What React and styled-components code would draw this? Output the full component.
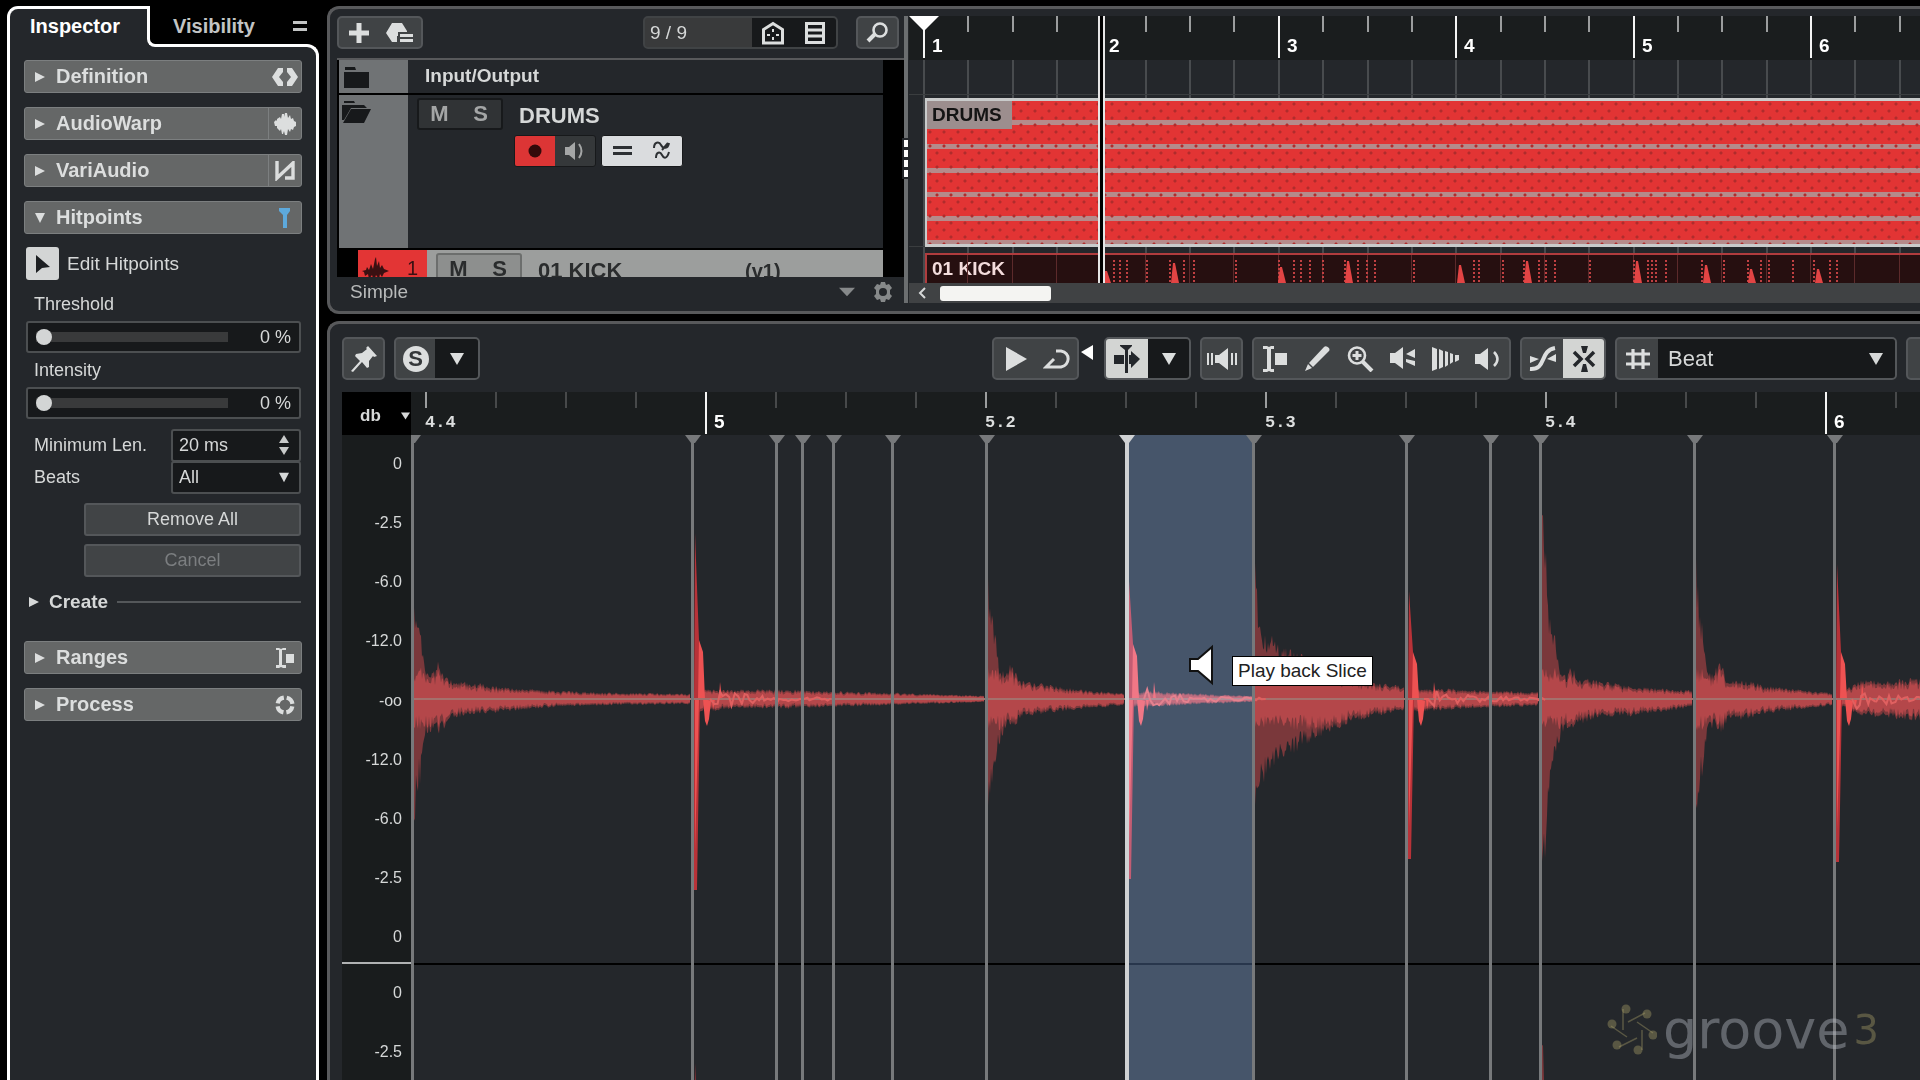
import React, { useState } from "react";
import styled, { createGlobalStyle } from "styled-components";

const GlobalStyle = createGlobalStyle`
  * {
    box-sizing: border-box;
  }

  body {
    margin: 0;
    background: #000;
    color: #d6d8d8;
    font-family: "Liberation Sans", Arial, sans-serif;
    font-size: 18px;
    overflow: hidden;
  }

  button, input, select {
    font: inherit;
    color: inherit;
    margin: 0;
    padding: 0;
    border: 0;
    background: none;
  }

  svg {
    display: block;
    flex: none;
  }
`;

const Page = styled.div`
  display: grid;
  grid-template-columns: 312px minmax(0, 1fr);
  grid-template-rows: minmax(0, 1fr);
  column-gap: 8px;
  height: 100vh;
  padding: 6px 0 0 7px;
  overflow: hidden;
`;

/* ---------- inspector ---------- */

const InspectorColumn = styled.aside`
  display: flex;
  flex-direction: column;
  min-height: 0;
`;

const InspectorTabs = styled.div`
  display: flex;
  height: 41px;
  padding-right: 12px;
  margin-bottom: -3px;
  position: relative;
  z-index: 1;
`;

const ActiveTab = styled.button`
  width: 152px;
  margin-right: -12px;
  padding: 0 0 3px 20px;
  text-align: left;
  font-size: 20px;
  font-weight: 700;
  color: #fff;
  background: #24272b;
  border-left: 3px solid #fff;
  border-top: 3px solid #fff;
  border-radius: 11px 0 0 0;
`;

const OtherTabs = styled.div`
  flex: 1;
  position: relative;
  display: flex;
  align-items: center;
  justify-content: space-between;
  padding: 2px 0 0 23px;
  background: #000;
  border-left: 3px solid #fff;
  border-bottom: 3px solid #fff;
  border-bottom-left-radius: 8px;
`;

const QuietTab = styled.button`
  font-size: 20px;
  font-weight: 700;
  color: #c2c4c4;
`;

const InspectorBody = styled.div`
  flex: 1;
  padding: 13px 14px 0;
  background: #24272b;
  border: 3px solid #fff;
  border-bottom: 0;
  border-radius: 0 12px 0 0;
`;

const Section = styled.section`
  margin-bottom: 14px;
`;

const SectionHead = styled.button`
  display: flex;
  align-items: center;
  width: 100%;
  height: 33px;
  padding-left: 9px;
  background: #656767;
  border: 1px solid #7c7f80;
  border-radius: 3px;
  color: #dcdede;
  font-size: 20px;
  font-weight: 700;
  text-align: left;
`;

const SectionTitle = styled.span`
  flex: 1;
  padding-left: 10px;
`;

const SectionIcon = styled.span`
  display: flex;
  align-items: center;
  justify-content: center;
  width: 33px;
  height: 100%;
  color: ${(p) => (p.$lit ? "#5da9dc" : "#dcdede")};
  border-left: 1px solid ${(p) => (p.$divided ? "#7c7f80" : "transparent")};
`;

const HitpointFields = styled.div`
  padding: 13px 1px 0 2px;
`;

const EditRow = styled.label`
  display: flex;
  align-items: center;
  gap: 8px;
  margin-bottom: 7px;
  font-size: 19px;
`;

const EditButton = styled.button`
  display: flex;
  align-items: center;
  justify-content: center;
  width: 33px;
  height: 33px;
  border-radius: 3px;
  background: #d3d5d5;
  color: #1c1f22;
`;

const FieldLabel = styled.label`
  display: block;
  padding-left: 8px;
  line-height: 34px;
`;

const SliderBox = styled.div`
  display: flex;
  align-items: center;
  justify-content: space-between;
  height: 32px;
  padding: 0 8px;
  background: #17191b;
  border: 2px solid #4c4f51;
  border-radius: 3px;
`;

const Slider = styled.input`
  appearance: none;
  width: 192px;
  height: 16px;

  &::-webkit-slider-runnable-track {
    height: 10px;
    background: #393a3b;
  }

  &::-webkit-slider-thumb {
    appearance: none;
    width: 16px;
    height: 16px;
    margin-top: -3px;
    border-radius: 50%;
    background: #d3d5d5;
  }
`;

const LengthGrid = styled.div`
  display: grid;
  grid-template-columns: 1fr 130px;
  grid-template-rows: 32px 32px;
  align-items: center;
  margin: 10px 0;
`;

const ValueBox = styled.div`
  display: flex;
  align-items: center;
  position: relative;
  height: 33px;
  padding: 0 10px 0 6px;
  background: #17191b;
  border: 2px solid #4c4f51;
  border-radius: 3px;
`;

const ValueInput = styled.input`
  flex: 1;
  min-width: 0;
`;

const Stepper = styled.button`
  color: #c8caca;
`;

const FieldSelect = styled.select`
  appearance: none;
  flex: 1;
  width: 100%;
  height: 100%;
  outline: none;
`;

const SelectArrow = styled.span`
  position: absolute;
  right: ${(p) => p.$right}px;
  pointer-events: none;
  color: #d6d8d8;
`;

const WideButton = styled.button`
  display: block;
  width: 217px;
  height: 33px;
  margin: 0 0 8px auto;
  background: #414446;
  border: 2px solid #54575a;
  border-radius: 3px;

  &:disabled {
    color: #7b7e80;
  }
`;

const CreateRow = styled.button`
  display: flex;
  align-items: center;
  gap: 9px;
  width: 100%;
  height: 34px;
  padding-left: 2px;
  font-size: 19px;
  font-weight: 700;
  margin-bottom: 22px;

  &::after {
    content: "";
    flex: 1;
    height: 2px;
    background: #54575a;
  }
`;

/* ---------- project window ---------- */

const Main = styled.main`
  display: grid;
  grid-template-rows: 308px minmax(0, 1fr);
  row-gap: 7px;
  min-width: 0;
`;

const ProjectPanel = styled.section`
  display: grid;
  grid-template-columns: 567px 5px minmax(0, 1fr);
  padding: 7px 0 8px 7px;
  background: #24272b;
  border: 3px solid #58595b;
  border-right: 0;
  border-radius: 12px 0 0 12px;
  overflow: hidden;
`;

const TrackColumn = styled.div`
  display: flex;
  flex-direction: column;
  min-height: 0;
`;

const TrackToolbar = styled.div`
  display: flex;
  align-items: center;
  margin: 0 5px 9px 0;
`;

const ToolGroup = styled.div`
  display: flex;
  flex: none;
  height: ${(p) => (p.$tall ? 43 : 33)}px;
  border: 2px solid #54575a;
  border-radius: 5px;
  background: #404345;
  overflow: hidden;
`;

const ToolButton = styled.button`
  display: flex;
  align-items: center;
  justify-content: center;
  flex: none;
  width: ${(p) => p.$w || 43}px;
  background: ${(p) =>
    p.$tone === "light" ? "#d3d5d3" : p.$tone === "dark" ? "#17191b" : "none"};
  color: ${(p) => (p.$tone === "light" ? "#24272b" : "#dcdede")};
`;

const Filler = styled.div`
  flex: 1;
`;

const VisibleCount = styled.span`
  display: flex;
  align-items: center;
  width: 107px;
  padding-left: 5px;
  font-size: 19px;
  background: #393a3b;
`;

const CountGroup = styled(ToolGroup)`
  margin-right: 18px;
  border-color: #404345;
`;

const TrackList = styled.div`
  flex: 1;
  min-height: 0;
  overflow: hidden;
  padding: 0 21px 0 2px;
  background: #000;
  border-top: 2px solid #58595b;
`;

const TrackRow = styled.div`
  display: flex;
  height: ${(p) => p.$h}px;
  margin-bottom: 2px;
  background: #24272b;
`;

const FolderStrip = styled.div`
  width: 69px;
  flex: none;
  padding: 6px 0 0 3px;
  background: #707375;
  color: #17191b;
`;

const FolderName = styled.span`
  padding: 6px 0 0 17px;
  font-size: 19px;
  line-height: 20px;
  font-weight: 700;
`;

const TrackControls = styled.div`
  display: grid;
  grid-template-columns: 86px auto;
  column-gap: 16px;
  row-gap: 1px;
  align-content: start;
  padding: 3px 0 0 9px;
`;

const MuteSolo = styled.div`
  display: flex;
  flex: none;
  width: 86px;
  height: 32px;
  border: 2px solid ${(p) => (p.$selected ? "#6c6e6d" : "#17191b")};
  border-radius: 3px;
  background: ${(p) => (p.$selected ? "#8d8f8e" : "#303335")};
`;

const MuteSoloButton = styled.button`
  flex: 1;
  font-size: 22px;
  font-weight: 700;
  line-height: 28px;
  color: ${(p) => (p.$selected ? "#2a2c2d" : "#a4a6a6")};
`;

const TrackName = styled.span`
  font-size: 22px;
  font-weight: 700;
  line-height: 36px;
`;

const TrackButtons = styled.div`
  grid-column: 2;
  display: flex;
  margin-left: -5px;
  gap: 5px;
`;

const TrackButtonPair = styled.div`
  display: flex;
  height: 32px;
  border: 1px solid #17191b;
  border-radius: 3px;
  background: ${(p) => (p.$light ? "#dadcde" : "#35383a")};
  overflow: hidden;
`;

const TrackButton = styled.button`
  display: flex;
  align-items: center;
  justify-content: center;
  width: 40px;
  background: ${(p) => (p.$record ? "#dc3535" : "none")};
  color: ${(p) => p.$ink || "#2d3033"};
`;

const KickRow = styled.div`
  display: flex;
  height: 48px;
  margin-left: 19px;
  background: #9c9e9d;
  color: #2a2c2d;
`;

const KickStrip = styled.div`
  display: flex;
  justify-content: space-between;
  width: 69px;
  flex: none;
  padding: 7px 9px 0 4px;
  margin-right: 9px;
  background: #e33535;
  color: #3a1012;
  font-size: 20px;
`;

const KickControls = styled.div`
  display: flex;
  flex: 1;
  padding-top: 3px;
`;

const KickName = styled(TrackName)`
  width: 223px;
  padding-left: 16px;
`;

const KickVersion = styled.span`
  font-size: 20px;
  font-weight: 700;
  line-height: 36px;
`;

const TrackFooter = styled.div`
  display: flex;
  align-items: center;
  height: 26px;
  padding: 3px 11px 0 13px;
  font-size: 19px;
  color: #b8baba;
`;

const FooterIcons = styled.div`
  display: flex;
  align-items: center;
  gap: 18px;
  margin-left: auto;
  color: #86898a;
`;

const PanelDivider = styled.div`
  display: flex;
  flex-direction: column;
  align-items: center;
  gap: 3px;
  width: 4px;
  padding-top: 124px;
  background: #6b6e70;
`;

const DividerGrip = styled.i`
  width: 4px;
  height: 7px;
  background: #fff;
  outline: 2px solid #24272b;
`;

const Arrangement = styled.div`
  position: relative;
  display: flex;
  flex-direction: column;
  min-width: 0;
  overflow: hidden;
`;

const Ruler = styled.div`
  position: relative;
  flex: none;
  height: ${(p) => p.$h}px;
  background: #1a1d1e;
  overflow: hidden;
`;

const Tick = styled.span`
  position: absolute;
  top: 0;
  height: ${(p) => (p.$major ? 42 : 16)}px;
  border-left: 2px solid
    ${(p) => (p.$major ? "#f4f4f4" : p.$faint ? "#47494a" : "#9b9d9e")};
`;

const BarNumber = styled.span`
  position: absolute;
  top: 20px;
  padding-left: 9px;
  font-size: 19px;
  line-height: 20px;
  font-weight: 700;
  color: #fff;
`;

const BeatNumber = styled(BarNumber)`
  top: 21px;
  padding-left: 0;
  font-family: "Liberation Mono", monospace;
  font-size: 17px;
  color: #dcdede;
`;

const Lanes = styled.div`
  position: relative;
  flex: 1;
  min-height: 0;
  padding-left: 16px;
  overflow: hidden;
`;

const GridLine = styled.i`
  position: absolute;
  top: 0;
  bottom: 0;
  width: 2px;
  background: #484b4e;
`;

const FolderLane = styled.div`
  position: relative;
  height: 153px;
  padding-top: 3px;
  margin: 34px 0 6px -16px;
  border-top: 1px solid #3a3d3f;
  border-bottom: 1px solid #3a3d3f;
`;

/* stacked stripes stand for the tracks inside the folder */
const FolderPart = styled.div`
  height: 149px;
  margin-left: 16px;
  border: solid #c9cbcb;
  border-width: 3px 0 3px 2px;
  background: radial-gradient(
        circle at 3px 3px,
        #b02c2c 0 1px,
        transparent 2px
      )
      0 0 / 14px 14px,
    radial-gradient(circle at 10px 10px, #b02c2c 0 1px, transparent 2px) 0 0 /
      14px 14px,
    repeating-linear-gradient(#e23434 0 19px, #b58b8b 19px 24px);
`;

const PartLabel = styled.span`
  display: inline-block;
  height: 28px;
  padding: 0 10px 0 5px;
  font-size: 19px;
  line-height: 28px;
  font-weight: 700;
  color: #141414;
  background: #9c8e8e;
`;

const KickPart = styled.div`
  position: relative;
  height: 40px;
  background: #260f10;
  border: solid #b03c3e;
  border-width: 2px 0 0 2px;
  color: #f3dcdc;
  font-size: 19px;
  line-height: 28px;
  font-weight: 700;
  padding-left: 5px;

  svg {
    position: absolute;
    left: 0;
    top: 0;
  }
`;

const Playhead = styled.i`
  position: absolute;
  top: 0;
  bottom: 20px;
  width: 7px;
  background: #000;
  border: solid #e6e6e6;
  border-width: 0 2px;
`;

const LocatorFlag = styled.svg`
  position: absolute;
  top: 0;
  left: 0;
`;

const ScrollRow = styled.div`
  display: flex;
  align-items: center;
  gap: 14px;
  height: 20px;
  padding-left: 9px;
  background: #404244;
`;

const ScrollThumb = styled.div`
  width: 111px;
  height: 15px;
  border-radius: 3px;
  background: #f4f4f2;
`;

/* ---------- sample editor ---------- */

const EditorPanel = styled.section`
  display: flex;
  flex-direction: column;
  min-height: 0;
  padding: 13px 0 0 12px;
  background: #24272b;
  border: solid #58595b;
  border-width: 3px 0 0 3px;
  border-radius: 12px 0 0 0;
  overflow: hidden;
`;

const EditorToolbar = styled.div`
  display: flex;
  align-items: center;
  gap: 9px;
  margin-bottom: 12px;
`;

const ToolbarSpace = styled.div`
  flex: 0 0 494px;
`;

const TransportGroup = styled.div`
  display: flex;
  flex: none;
  gap: 2px;
  width: 103px;
`;

const SoloBadge = styled.span`
  width: 26px;
  height: 26px;
  border-radius: 50%;
  background: #dcdede;
  color: #35383a;
  font-size: 22px;
  line-height: 26px;
  font-weight: 700;
`;

const GridSelect = styled.div`
  display: flex;
  align-items: center;
  position: relative;
  width: 237px;
  padding-left: 10px;
  background: #17191b;
  font-size: 22px;
`;

const EditorGrid = styled.div`
  flex: 1;
  display: grid;
  grid-template-columns: 69px minmax(0, 1fr);
  grid-template-rows: 43px minmax(0, 1fr);
  min-height: 0;
`;

const UnitCell = styled.button`
  display: flex;
  align-items: center;
  justify-content: space-between;
  padding: 4px 1px 0 18px;
  background: #000;
  font-size: 17px;
  font-weight: 700;
`;

const LevelScale = styled.div`
  background: #191c1d;
  font-size: 16px;
  text-align: right;
  overflow: hidden;
`;

const LevelChannel = styled.div`
  display: flex;
  flex-direction: column;
  justify-content: space-between;
  height: 529px;
  padding: 20px 9px 16px 0;
  border-bottom: 2px solid #b0b2b3;
`;

const WaveCanvas = styled.div`
  position: relative;
  overflow: hidden;
  background: #24272b;

  > svg {
    width: 100%;
    height: 100%;
  }
`;

const SliceCursor = styled.svg`
  && {
    position: absolute;
    left: 776px;
    top: 209px;
    width: 28px;
    height: 42px;
  }
`;

const Tooltip = styled.div`
  position: absolute;
  left: 821px;
  top: 221px;
  padding: 0 5px;
  background: #fff;
  border: 1px solid #000;
  color: #222;
  font-size: 19px;
  line-height: 28px;
`;

const Watermark = styled.div`
  position: absolute;
  right: 41px;
  bottom: 18px;
  display: flex;
  align-items: center;
  gap: 4px;
  font-family: "DejaVu Sans", sans-serif;
  font-size: 54px;
  line-height: 64px;
  color: rgba(190, 196, 204, 0.4);

  > svg {
    width: 50px;
    height: 52px;
    margin-right: 2px;
    color: rgba(170, 160, 105, 0.4);
  }
`;

const WatermarkDigit = styled.span`
  font-size: 40px;
  color: rgba(170, 160, 105, 0.4);
`;

/* ---------- icons ---------- */

const Icon = ({ w = 24, h = w, box, stretch, children }) => (
  <svg
    width={w}
    height={h}
    viewBox={box || `0 0 ${w} ${h}`}
    preserveAspectRatio={stretch ? "none" : undefined}
    fill="currentColor"
    aria-hidden="true"
  >
    {children}
  </svg>
);

const Caret = ({ open }) => (
  <Icon w={12}>
    <path d={open ? "M1 1h10L6 11z" : "M1 1l10 5-10 5z"} />
  </Icon>
);

const DownArrow = ({ w = 14, h = 14 }) => (
  <Icon w={w} h={h} box="0 0 14 14" stretch>
    <path d="M0 1h14L7 13z" />
  </Icon>
);

const icons = {
  definition: (
    <Icon w={26} h={20}>
      <path d="M11 1H6L0 10l6 9h5v-4l-4-5 4-5zM15 1h5l6 9-6 9h-5v-4l4-5-4-5z" />
    </Icon>
  ),
  warp: (
    <Icon w={22}>
      <path d="M0 9l2-2 1 1V6l3-2 1 2 1-5h2v3l1-4h2l1 5 2-3 1 4 2-1 1 3 2 1v4l-2 1-1 3-2-1-1 3-2-3-1 6h-2l-1-4-1 3H8l-1-5-1 2-3-3v-2H1z" />
    </Icon>
  ),
  vari: (
    <Icon w={20}>
      <path
        d="M2 0v17L18 2v15h-8"
        fill="none"
        stroke="currentColor"
        strokeWidth="3.4"
      />
    </Icon>
  ),
  hitpoint: (
    <Icon w={14} h={20}>
      <path d="M1 0h11v3L9 7v13H5V7L1 3z" />
    </Icon>
  ),
  range: (
    <Icon w={20} h={22}>
      <path d="M1 1h3l2 1 2-1h3v2H7v15h4v3H8l-2-1-2 1H1v-3h3V3H1zM11 7h8v9h-8z" />
    </Icon>
  ),
  process: (
    <Icon w={20}>
      <circle
        cx="10"
        cy="10"
        r="7.5"
        fill="none"
        stroke="currentColor"
        strokeWidth="4.2"
        strokeDasharray="8.8 3"
        strokeDashoffset="-1.5"
      />
    </Icon>
  ),
  pointer: (
    <Icon w={16} h={20}>
      <path d="M1 1l14 12-8 1-6 5z" />
    </Icon>
  ),
  plus: (
    <Icon w={20}>
      <path d="M7.500 0h5v7.500h7.500v5h-7.500V20h-5v-7.500H0v-5h7.500z" />
    </Icon>
  ),
  preset: (
    <Icon w={28} h={20}>
      <path d="M6 0h10l5 8v1h-9v4h-1v6H6L0 10zM14 11h13v3H14zM14 16h13v3H14z" />
    </Icon>
  ),
  agents: (
    <Icon w={24}>
      <path
        d="M2.500 22V8.500L12 2.500l9.500 6V22z"
        fill="none"
        stroke="currentColor"
        strokeWidth="3"
      />
      <path d="M11 8h2v3h-2zM11 16h2v3h-2zM6 13h3v2H6zM15 13h3v2h-3z" />
    </Icon>
  ),
  zones: (
    <Icon w={24}>
      <path
        d="M3.500 2.500h17v19h-17zM5 9h14M5 15h14"
        fill="none"
        stroke="currentColor"
        strokeWidth="3"
      />
    </Icon>
  ),
  search: (
    <Icon w={24}>
      <circle
        cx="14"
        cy="9"
        r="6.500"
        fill="none"
        stroke="currentColor"
        strokeWidth="2.600"
      />
      <path d="M9 13l-7 7" stroke="currentColor" strokeWidth="4" />
    </Icon>
  ),
  folder: (
    <Icon w={28} h={22}>
      <path d="M3 1h10l1 3H3zM2 6h25v16H2z" />
    </Icon>
  ),
  folderOpen: (
    <Icon w={30} h={22}>
      <path d="M2 0h10l1 2H2zM0 4h22l3 3H9L2 19H0zM9 8h20l-7 14H1z" />
    </Icon>
  ),
  monitor: (
    <Icon w={20} h={18}>
      <path d="M0 5h4l6-5v18l-6-5H0z" />
      <path
        d="M14 2q5 7 0 14"
        fill="none"
        stroke="currentColor"
        strokeWidth="2"
      />
    </Icon>
  ),
  lanes: (
    <Icon w={19} h={12}>
      <path d="M0 1h19v3H0zM0 7h19v3H0z" />
    </Icon>
  ),
  phase: (
    <Icon w={18} h={20}>
      <path
        d="M1 7C1 1 6 0 8 4s7 4 8-2M3 17c0-6 4-7 6-3s5 4 7-3M15 2L9 9"
        fill="none"
        stroke="currentColor"
        strokeWidth="2"
      />
    </Icon>
  ),
  kick: (
    <Icon w={28} h={24}>
      <path d="M0 14l4-1 1-3 2 3 2-6 2 5 2-10 1-2 1 9 2-5 1 7 2-3 2 4 5 2-5 2-2 4-2-3-1 5-3-4-2 6-2-6-3 4-1-5-3 2-1-4z" />
    </Icon>
  ),
  gear: (
    <Icon w={20}>
      <path
        fillRule="evenodd"
        d="M8 0h4l1 3 3-1 3 4-2 2v4l2 2-3 4-3-1-1 3H8l-1-3-3 1-3-4 2-2V8L1 6l3-4 3 1zM10 6a4 4 0 100 8 4 4 0 000-8z"
      />
    </Icon>
  ),
  pin: (
    <Icon w={26} h={26}>
      <path d="M17 0l9 10-3 1-1-1-4 5v6l-2 1-5-6-9 10-2-1L9 15 4 10l1-2 6-1 5-4-1-1z" />
    </Icon>
  ),
  play: (
    <Icon w={22} h={24}>
      <path d="M1 0l21 12L1 24z" />
    </Icon>
  ),
  loop: (
    <Icon w={28} h={22}>
      <path
        d="M13 3h5c10 2 9 14 0 16H3l8-8"
        fill="none"
        stroke="currentColor"
        strokeWidth="3"
      />
    </Icon>
  ),
  autoscroll: (
    <Icon w={28} h={28}>
      <path d="M1 10h10v9H1zM16 10h2V6l9 8-9 9v-4h-2zM7 0h12v1l-4 4v23h-3V5L7 1z" />
    </Icon>
  ),
  audition: (
    <Icon w={32} h={22}>
      <path d="M9 7h4l9-7v22l-9-7H9zM1 5h2v12H1zM5 5h2v12H5zM25 5h2v12h-2zM29 5h2v12h-2z" />
    </Icon>
  ),
  rangeTool: (
    <Icon w={24} h={26}>
      <path d="M0 0h4l2 1 2-1h3v3H8v20h3v3H8l-2-1-2 1H0v-3h4V3H0zM12 7h12v12H12z" />
    </Icon>
  ),
  pencil: (
    <Icon w={26} h={26}>
      <path d="M20 1q2-2 5 1 1 2 0 3L9 21l-4-4zM4 18l4 4-7 3z" />
    </Icon>
  ),
  zoomTool: (
    <Icon w={28} h={26}>
      <circle
        cx="11"
        cy="9.500"
        r="8"
        fill="none"
        stroke="currentColor"
        strokeWidth="2.600"
      />
      <path d="M9.500 5h3v3h3v3h-3v3h-3v-3h-3V8h3z" />
      <path d="M16 15l10 10" stroke="currentColor" strokeWidth="4" />
    </Icon>
  ),
  playTool: (
    <Icon w={26} h={24}>
      <path d="M0 6h5l8-6v22l-8-6H0zM25 2v9l-9-4zM16 12l9 2v5l-9-4z" />
    </Icon>
  ),
  scrub: (
    <Icon w={28} h={24}>
      <path d="M0 0l5 2v20l-5 2zM7 2l4 2v16l-4 2zM13 4l3 1v13l-3 2zM18 6l3 1v8l-3 2zM23 8h4v5l-4 2z" />
    </Icon>
  ),
  speaker: (
    <Icon w={26} h={22}>
      <path d="M0 6h5l8-6v22l-8-6H0z" />
      <path
        d="M19 4q7 7 0 14"
        fill="none"
        stroke="currentColor"
        strokeWidth="2.500"
      />
    </Icon>
  ),
  crossing: (
    <Icon w={28} h={26}>
      <path d="M1 10l9 3-9 4zM27 8v8l-9-3z" />
      <path
        d="M1 23C18 24 10 5 26 2"
        fill="none"
        stroke="currentColor"
        strokeWidth="4"
      />
    </Icon>
  ),
  snap: (
    <Icon w={24} h={26}>
      <path d="M9 0h7l-2 7h-3zM11 18h3l2 8H9z" />
      <path
        d="M2 6l7 7-7 7M22 6l-7 7 7 7"
        fill="none"
        stroke="currentColor"
        strokeWidth="3.500"
      />
    </Icon>
  ),
  grid: (
    <Icon w={24} h={20}>
      <path
        d="M7 0v20M17 0v20M0 5h24M0 15h24"
        fill="none"
        stroke="currentColor"
        strokeWidth="3.200"
      />
    </Icon>
  ),
};

/* ---------- data ---------- */

const BEAT = 44.35;
const FIRST_BEAT = 15;
const beats = Array.from({ length: 23 }, (_, i) => ({
  x: Math.round(FIRST_BEAT + i * BEAT) - 1,
  bar: i % 4 === 0 ? i / 4 + 1 : null,
}));

const steps = Array.from({ length: 22 }, (_, i) => {
  const beat = 3 + Math.floor(i / 4);
  return {
    x: 14 + i * 70,
    bar: i % 4 === 0 && beat % 4 === 0 ? 4 + beat / 4 : null,
    beat: i % 4 === 0 ? `${4 + Math.floor(beat / 4)}.${(beat % 4) + 1}` : null,
  };
});

const kickDots = [
  187, 193, 200, 220, 243, 257, 267, 309, 352, 367, 374, 383, 396, 418, 431,
  440, 448, 487, 547, 552, 576, 597, 612, 619, 628, 663, 707, 721, 725, 729,
  739, 775, 797, 821, 834, 842, 866, 887, 903, 910,
];
const kickSpikes = [
  [179, 12], [247, 20], [354, 16], [421, 22], [533, 18], [600, 22], [710, 22],
  [779, 18], [824, 14], [891, 14],
];

const levels = ["0", "-2.5", "-6.0", "-12.0", "-oo", "-12.0", "-6.0", "-2.5", "0"];

const hitpoints = [1, 281, 365, 391, 422, 481, 575, 715, 842, 995, 1079, 1129, 1283, 1423];
const SELECTED = 715;

// [x, peak above the zero line, peak below it]
const slices = [
  [[1, 150, 135], [4, 95, 115], [6, 81, 92], [9, 64, 80], [13, 40, 40], [16, 28, 32], [23, 26, 28], [27, 36, 34], [33, 22, 28], [38, 18, 18], [68, 15, 14], [90, 11, 12], [140, 8, 8], [200, 6, 6], [280, 5, 5]],
  [[281, 9, 14], [320, 9, 9], [370, 9, 9], [440, 7, 7], [510, 5, 5], [574, 3, 3]],
  [[575, 135, 110], [578, 100, 98], [581, 82, 92], [585, 58, 64], [588, 30, 42], [593, 25, 34], [599, 32, 24], [605, 25, 26], [610, 17, 17], [640, 13, 13], [676, 8, 9], [714, 5, 6]],
  [[715, 8, 9], [745, 7, 7], [790, 5, 5], [842, 3, 3]],
  [[843, 150, 110], [845, 118, 101], [848, 74, 88], [862, 58, 70], [880, 46, 52], [902, 36, 38], [932, 24, 25], [960, 16, 17], [994, 12, 10]],
  [[995, 9, 13], [1040, 10, 10], [1080, 8, 8], [1128, 7, 7]],
  [[1130, 190, 175], [1134, 155, 156], [1138, 90, 112], [1142, 70, 66], [1147, 42, 46], [1151, 24, 31], [1156, 24, 28], [1160, 34, 27], [1166, 20, 25], [1186, 18, 17], [1219, 12, 16], [1282, 8, 8]],
  [[1284, 140, 110], [1287, 108, 96], [1289, 84, 84], [1294, 54, 54], [1297, 24, 31], [1303, 24, 26], [1307, 34, 28], [1312, 32, 32], [1316, 17, 20], [1334, 18, 19], [1356, 12, 13], [1422, 6, 6]],
  [[1424, 7, 7], [1436, 10, 10], [1450, 18, 16], [1480, 17, 18], [1500, 20, 20], [1600, 18, 18], [2600, 5, 5]],
];

// [x, thin attack, body, trough]
const kicks = [
  [281, 166, 59, 191],
  [715, 118, 55, 180],
  [995, 108, 47, 160],
  [1423, 135, 47, 163],
];

const noise = (n) => {
  const v = Math.sin(n * 127.1) * 43758.5453;
  return v - Math.floor(v);
};

const outline = (points, zero, scale, cap, rough) => {
  const top = [];
  const bottom = [];
  for (let i = 0; i < points.length - 1; i++) {
    const [x0, u0, d0] = points[i];
    const [x1, u1, d1] = points[i + 1];
    for (let x = x0; x < x1; x++) {
      const t = (x - x0) / (x1 - x0);
      const up = Math.min(u0 + (u1 - u0) * t, cap) * scale;
      const down = Math.min(d0 + (d1 - d0) * t, cap) * scale;
      const above = up * (1.1 - rough * noise(x));
      const below = down * (1.1 - rough * noise(x + 900));
      top.push(`${x} ${(zero - above).toFixed(1)}`);
      bottom.unshift(`${x} ${(zero + below).toFixed(1)}`);
    }
  }
  return `M${top.concat(bottom).join("L")}Z`;
};

const ripple = (x, zero) => {
  let d = `M${x + 18} ${zero}`;
  for (let i = 0; i < 40; i++) {
    const size = 10 * Math.exp(-i / 10) + 1.5;
    const px = x + 21 + i * 3 + noise(i * 3 + x) * 2;
    const swing = (noise(x + i * 7) - 0.5) * 2 * size;
    d += `L${px.toFixed(1)} ${(zero + swing).toFixed(1)}`;
  }
  return d;
};

const Channel = ({ zero }) => (
  <g>
    {slices.map((points) => (
      <g key={points[0][0]}>
        <path d={outline(points, zero, 1, 400, 0.4)} fill="#7a383b" />
        <path d={outline(points, zero, 0.85, 34, 0.55)} fill="#b4474a" />
      </g>
    ))}
    {kicks.map(([x, attack, body, trough]) => (
      <g key={x} transform={`translate(${x} ${zero})`}>
        <path
          d={`M2 0L3 ${-attack}L7 ${-body}L7 0ZM1 0L2 ${trough}L5 ${trough}L8 0Z`}
          fill="#b83238"
        />
        <path
          d={`M6 0L7 ${-body}L11 ${12 - body}L13 0L19 2L17 20L15 27L13 22L11 0ZM3 0L3 ${trough * 0.8}L7 0ZM20 0L21 12L23 0ZM27 0L28 -17L30 0Z`}
          fill="#ee5252"
        />
      </g>
    ))}
    <rect x="0" y={zero - 1} width="100%" height="2" fill="#a4706c" />
    {kicks.map(([x]) => (
      <path
        key={x}
        d={ripple(x, zero)}
        fill="none"
        stroke="#e06060"
        strokeWidth="2"
      />
    ))}
  </g>
);

const Waveform = () => (
  <svg role="img" aria-label="Waveform with hitpoints">
    <Channel zero={264} />
    <Channel zero={794} />
    <rect y="528" width="100%" height="2" fill="#000" />
    <rect
      x="717"
      width="124"
      height="100%"
      fill="#28364c"
      style={{ mixBlendMode: "screen" }}
    />
    {hitpoints.map((x) => (
      <g key={x} fill={x === SELECTED ? "#cfd1d3" : "#77797b"}>
        <rect x={x - 1} width={x === SELECTED ? 4 : 3} height="100%" />
        <path d={`M${x - 7} 0h16l-6 8h-4z`} />
      </g>
    ))}
  </svg>
);

/* ---------- parts ---------- */

const InspectorSection = ({ title, icon, divided, lit, open, children }) => (
  <Section>
    <SectionHead aria-expanded={!!open}>
      <Caret open={open} />
      <SectionTitle>{title}</SectionTitle>
      <SectionIcon $divided={divided} $lit={lit}>
        {icons[icon]}
      </SectionIcon>
    </SectionHead>
    {children}
  </Section>
);

const PercentSlider = ({ id, label }) => {
  const [value, setValue] = useState(0);

  return (
    <>
      <FieldLabel htmlFor={id}>{label}</FieldLabel>
      <SliderBox>
        <Slider
          id={id}
          type="range"
          value={value}
          onChange={(e) => setValue(e.target.value)}
        />
        <output htmlFor={id}>{value} %</output>
      </SliderBox>
    </>
  );
};

const Inspector = () => (
  <InspectorColumn>
    <InspectorTabs>
      <ActiveTab>Inspector</ActiveTab>
      <OtherTabs>
        <QuietTab>Visibility</QuietTab>
        <QuietTab aria-label="Set up inspector">
          <Icon w={15} h={12}>
            <path d="M1 1h14v3H1zM1 8h14v3H1z" />
          </Icon>
        </QuietTab>
      </OtherTabs>
    </InspectorTabs>
    <InspectorBody>
      <InspectorSection title="Definition" icon="definition" />
      <InspectorSection title="AudioWarp" icon="warp" divided />
      <InspectorSection title="VariAudio" icon="vari" divided />
      <InspectorSection title="Hitpoints" icon="hitpoint" lit open>
        <HitpointFields>
          <EditRow>
            <EditButton>{icons.pointer}</EditButton>
            Edit Hitpoints
          </EditRow>
          <PercentSlider id="threshold" label="Threshold" />
          <PercentSlider id="intensity" label="Intensity" />
          <LengthGrid>
            <FieldLabel htmlFor="minLength">Minimum Len.</FieldLabel>
            <ValueBox>
              <ValueInput id="minLength" defaultValue="20 ms" />
              <Stepper aria-label="Step length">
                <Icon w={10} h={20}>
                  <path d="M5 0l5 8H0zM0 12h10l-5 8z" />
                </Icon>
              </Stepper>
            </ValueBox>
            <FieldLabel htmlFor="beats">Beats</FieldLabel>
            <ValueBox>
              <FieldSelect id="beats">
                <option>All</option>
              </FieldSelect>
              <SelectArrow $right={10}>
                <DownArrow w={10} h={11} />
              </SelectArrow>
            </ValueBox>
          </LengthGrid>
          <WideButton>Remove All</WideButton>
          <WideButton disabled>Cancel</WideButton>
          <CreateRow>
            <Caret />
            Create
          </CreateRow>
        </HitpointFields>
      </InspectorSection>
      <InspectorSection title="Ranges" icon="range" />
      <InspectorSection title="Process" icon="process" />
    </InspectorBody>
  </InspectorColumn>
);

const Tracks = () => (
  <TrackColumn>
    <TrackToolbar>
      <ToolGroup>
        <ToolButton $w={39} aria-label="Add track">{icons.plus}</ToolButton>
        <ToolButton aria-label="Track preset">{icons.preset}</ToolButton>
      </ToolGroup>
      <Filler />
      <CountGroup>
        <VisibleCount>9 / 9</VisibleCount>
        <ToolButton $w={42} $tone="dark" aria-label="Visibility agents">{icons.agents}</ToolButton>
        <ToolButton $w={42} $tone="dark" aria-label="Zones">{icons.zones}</ToolButton>
      </CountGroup>
      <ToolGroup>
        <ToolButton $w={39} aria-label="Find tracks">{icons.search}</ToolButton>
      </ToolGroup>
    </TrackToolbar>
    <TrackList>
      <TrackRow $h={33}>
        <FolderStrip>{icons.folder}</FolderStrip>
        <FolderName>Input/Output</FolderName>
      </TrackRow>
      <TrackRow $h={153}>
        <FolderStrip>{icons.folderOpen}</FolderStrip>
        <TrackControls>
          <MuteSolo>
            <MuteSoloButton>M</MuteSoloButton>
            <MuteSoloButton>S</MuteSoloButton>
          </MuteSolo>
          <TrackName>DRUMS</TrackName>
          <TrackButtons>
            <TrackButtonPair>
              <TrackButton $record $ink="#330a0a" aria-label="Record enable">
                <Icon w={14}>
                  <circle cx="7" cy="7" r="6.500" />
                </Icon>
              </TrackButton>
              <TrackButton $ink="#a4a6a6" aria-label="Monitor">{icons.monitor}</TrackButton>
            </TrackButtonPair>
            <TrackButtonPair $light>
              <TrackButton aria-label="Group editing">{icons.lanes}</TrackButton>
              <TrackButton aria-label="Phase-coherent warp">{icons.phase}</TrackButton>
            </TrackButtonPair>
          </TrackButtons>
        </TrackControls>
      </TrackRow>
      <KickRow>
        <KickStrip>
          {icons.kick}
          <span>1</span>
        </KickStrip>
        <KickControls>
          <MuteSolo $selected>
            <MuteSoloButton $selected>M</MuteSoloButton>
            <MuteSoloButton $selected>S</MuteSoloButton>
          </MuteSolo>
          <KickName>01 KICK</KickName>
          <KickVersion>(v1)</KickVersion>
        </KickControls>
      </KickRow>
    </TrackList>
    <TrackFooter>
      Simple
      <FooterIcons>
        <DownArrow w={16} h={10} />
        {icons.gear}
      </FooterIcons>
    </TrackFooter>
  </TrackColumn>
);

const ProjectTimeline = () => (
  <Arrangement>
    <Ruler $h={44}>
      {beats.map(({ x, bar }) => (
        <React.Fragment key={x}>
          <Tick $major={bar} style={{ left: x }} />
          {bar && <BarNumber style={{ left: x }}>{bar}</BarNumber>}
        </React.Fragment>
      ))}
    </Ruler>
    <Lanes>
      {beats.map(({ x }) => (
        <GridLine key={x} style={{ left: x }} />
      ))}
      <FolderLane>
        <FolderPart>
          <PartLabel>DRUMS</PartLabel>
        </FolderPart>
      </FolderLane>
      <KickPart>
        <svg width="100%" height="28" aria-hidden="true">
          {beats.map(({ x }) => (
            <rect key={x} x={x - 18} width="1" height="28" fill="#5c2a2b" />
          ))}
          {kickDots.map((x) => (
            <path
              key={x}
              d={`M${x} 5v23`}
              stroke="#c04042"
              strokeWidth="2"
              strokeDasharray="2 2"
            />
          ))}
          {kickSpikes.map(([x, h]) => (
            <path key={x} d={`M${x - 3} 28l2-${h}h2l4 ${h}z`} fill="#e24444" />
          ))}
        </svg>
        01 KICK
      </KickPart>
    </Lanes>
    <ScrollRow>
      <Icon w={8} h={12}>
        <path d="M7 1L2 6l5 5" fill="none" stroke="currentColor" strokeWidth="2" />
      </Icon>
      <ScrollThumb />
    </ScrollRow>
    <LocatorFlag width="30" height="15">
      <path d="M0 0h30L15 15z" fill="#fff" />
    </LocatorFlag>
    <Playhead style={{ left: FIRST_BEAT + 4 * BEAT - 3 }} />
  </Arrangement>
);

const Editor = () => (
  <EditorPanel>
    <EditorToolbar>
      <ToolGroup $tall>
        <ToolButton $w={39} aria-label="Pin">{icons.pin}</ToolButton>
      </ToolGroup>
      <ToolGroup $tall>
        <ToolButton $w={39} aria-label="Solo editor">
          <SoloBadge>S</SoloBadge>
        </ToolButton>
        <ToolButton $tone="dark" aria-label="Solo options">
          <DownArrow />
        </ToolButton>
      </ToolGroup>
      <ToolbarSpace />
      <TransportGroup>
        <ToolGroup $tall>
          <ToolButton aria-label="Audition">{icons.play}</ToolButton>
          <ToolButton $w={40} aria-label="Audition loop">{icons.loop}</ToolButton>
        </ToolGroup>
        <Icon w={12} h={31}>
          <path d="M12 8v15L0 15z" fill="#fff" />
        </Icon>
      </TransportGroup>
      <ToolGroup $tall>
        <ToolButton $w={42} $tone="light" aria-label="Auto-scroll">{icons.autoscroll}</ToolButton>
        <ToolButton $w={41} $tone="dark" aria-label="Auto-scroll options">
          <DownArrow />
        </ToolButton>
      </ToolGroup>
      <ToolGroup $tall>
        <ToolButton $w={39} aria-label="Acoustic feedback">{icons.audition}</ToolButton>
      </ToolGroup>
      <ToolGroup $tall>
        <ToolButton $w={41} aria-label="Range selection">{icons.rangeTool}</ToolButton>
        <ToolButton aria-label="Draw">{icons.pencil}</ToolButton>
        <ToolButton aria-label="Zoom">{icons.zoomTool}</ToolButton>
        <ToolButton aria-label="Play tool">{icons.playTool}</ToolButton>
        <ToolButton aria-label="Scrub">{icons.scrub}</ToolButton>
        <ToolButton $w={42} aria-label="Volume">{icons.speaker}</ToolButton>
      </ToolGroup>
      <ToolGroup $tall>
        <ToolButton $w={41} aria-label="Snap to zero crossing">{icons.crossing}</ToolButton>
        <ToolButton $w={41} $tone="light" aria-label="Snap">{icons.snap}</ToolButton>
      </ToolGroup>
      <ToolGroup $tall>
        <ToolButton $w={41} aria-label="Grid">{icons.grid}</ToolButton>
        <GridSelect>
          <FieldSelect aria-label="Grid type">
            <option>Beat</option>
          </FieldSelect>
          <SelectArrow $right={12}>
            <DownArrow />
          </SelectArrow>
        </GridSelect>
      </ToolGroup>
      <ToolGroup $tall>
        <ToolButton aria-label="Quantize" />
      </ToolGroup>
    </EditorToolbar>
    <EditorGrid>
      <UnitCell>
        db
        <DownArrow w={9} h={8} />
      </UnitCell>
      <Ruler $h={43}>
        {steps.map(({ x, bar, beat }) => (
          <React.Fragment key={x}>
            <Tick $major={bar} $faint={!beat} style={{ left: x }} />
            {bar && <BarNumber style={{ left: x }}>{bar}</BarNumber>}
            {beat && !bar && <BeatNumber style={{ left: x }}>{beat}</BeatNumber>}
          </React.Fragment>
        ))}
      </Ruler>
      <LevelScale>
        {[0, 1].map((channel) => (
          <LevelChannel key={channel}>
            {levels.map((level, i) => (
              <span key={i}>{level}</span>
            ))}
          </LevelChannel>
        ))}
      </LevelScale>
      <WaveCanvas>
        <Waveform />
        <SliceCursor viewBox="0 0 28 42">
          <path
            d="M3 15h8L25 3v36L11 27H3z"
            fill="#fff"
            stroke="#111"
            strokeWidth="2"
          />
        </SliceCursor>
        <Tooltip role="tooltip">Play back Slice</Tooltip>
        <Watermark>
          <svg viewBox="0 0 50 52" fill="currentColor" aria-hidden="true">
            <circle cx="19" cy="5" r="4.500" />
            <circle cx="40" cy="10" r="4.500" />
            <circle cx="46" cy="31" r="4.500" />
            <circle cx="31" cy="46" r="4.500" />
            <circle cx="10" cy="41" r="4.500" />
            <circle cx="5" cy="20" r="4.500" />
            <path
              d="M16 5v21M38 9L21 18M46 29L30 18M35 46V26M12 43l18-9M4 22l16 11"
              fill="none"
              stroke="currentColor"
              strokeWidth="1.500"
            />
          </svg>
          <span>groove</span>
          <WatermarkDigit>3</WatermarkDigit>
        </Watermark>
      </WaveCanvas>
    </EditorGrid>
  </EditorPanel>
);

const App = () => (
  <>
    <GlobalStyle />
    <Page>
      <Inspector />
      <Main>
        <ProjectPanel>
          <Tracks />
          <PanelDivider>
            <DividerGrip />
            <DividerGrip />
            <DividerGrip />
            <DividerGrip />
          </PanelDivider>
          <ProjectTimeline />
        </ProjectPanel>
        <Editor />
      </Main>
    </Page>
  </>
);

export default App;
